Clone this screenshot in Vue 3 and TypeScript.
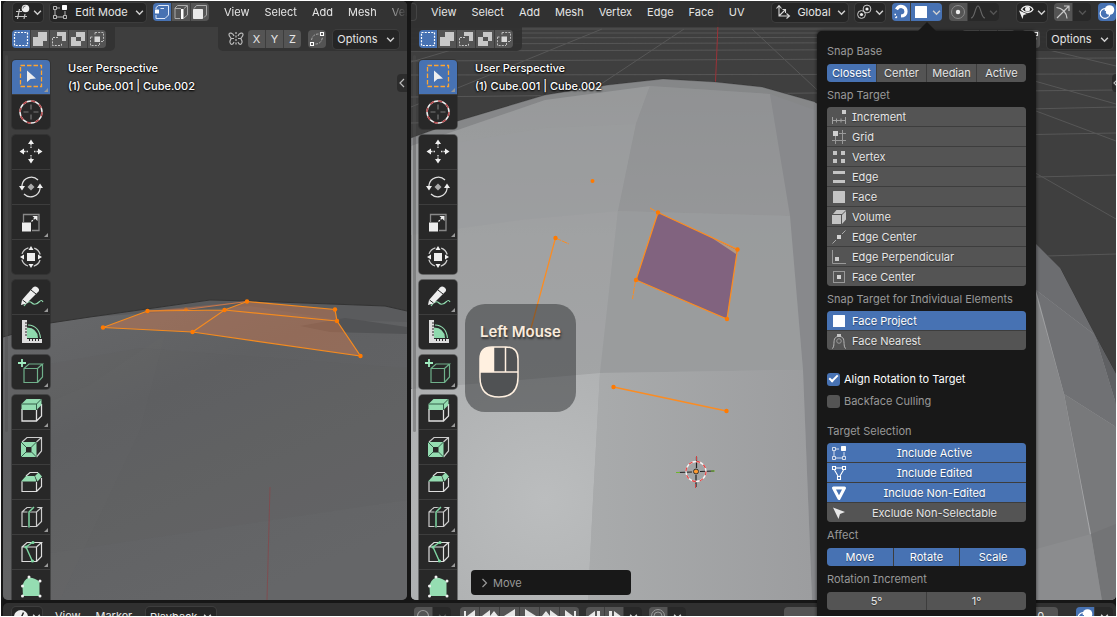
<script setup lang="ts">
import { ref } from 'vue'

interface Tool { id: string; label: string; more?: boolean }
interface Option { id: string; label: string }

const toolGroups: Tool[][] = [
  [{ id: 'select', label: 'Select Box', more: true }, { id: 'cursor', label: 'Cursor' }],
  [
    { id: 'move', label: 'Move' },
    { id: 'rotate', label: 'Rotate' },
    { id: 'scale', label: 'Scale', more: true },
    { id: 'transform', label: 'Transform' },
  ],
  [{ id: 'annotate', label: 'Annotate', more: true }, { id: 'measure', label: 'Measure' }],
  [{ id: 'addcube', label: 'Add Cube', more: true }],
  [
    { id: 'extrude', label: 'Extrude Region', more: true },
    { id: 'inset', label: 'Inset Faces' },
    { id: 'bevel', label: 'Bevel' },
    { id: 'loopcut', label: 'Loop Cut', more: true },
    { id: 'knife', label: 'Knife', more: true },
    { id: 'poly', label: 'Poly Build' },
  ],
]
const selectModes = ['new', 'extend', 'subtract', 'invert', 'intersect']
const menusLeft = ['View', 'Select', 'Add', 'Mesh', 'Vertex']
const menusRight = ['View', 'Select', 'Add', 'Mesh', 'Vertex', 'Edge', 'Face', 'UV']
const axes = ['X', 'Y', 'Z']
const snapBases = ['Closest', 'Center', 'Median', 'Active']
const snapTargets: Option[] = [
  { id: 'increment', label: 'Increment' },
  { id: 'grid', label: 'Grid' },
  { id: 'vertex', label: 'Vertex' },
  { id: 'edge', label: 'Edge' },
  { id: 'face', label: 'Face' },
  { id: 'volume', label: 'Volume' },
  { id: 'edgecenter', label: 'Edge Center' },
  { id: 'perp', label: 'Edge Perpendicular' },
  { id: 'facecenter', label: 'Face Center' },
]
const individualTargets: Option[] = [
  { id: 'face', label: 'Face Project' },
  { id: 'nearest', label: 'Face Nearest' },
]
const selections: Option[] = [
  { id: 'object', label: 'Include Active' },
  { id: 'edited', label: 'Include Edited' },
  { id: 'nonedited', label: 'Include Non-Edited' },
  { id: 'arrow', label: 'Exclude Non-Selectable' },
]
const affects = ['Move', 'Rotate', 'Scale']

const activeTool = ref('select')
const activeMode = ref('new')
const base = ref('Closest')
const target = ref('')
const individual = ref('Face Project')
const align = ref(true)
const backface = ref(false)
const included = ref(['Include Active', 'Include Edited', 'Include Non-Edited'])
const affected = ref(['Move', 'Rotate', 'Scale'])
const coarse = ref('5°')
const fine = ref('1°')

function flip(list: string[], item: string): string[] {
  return list.includes(item) ? list.filter((entry) => entry !== item) : [...list, item]
}
</script>

<template>
  <div class="app">
    <svg class="defs" aria-hidden="true">
      <symbol id="i-chev" viewBox="0 0 8 8"><path d="M1 2.5 4 5.5 7 2.5" fill="none" stroke="currentColor" stroke-width="1.3" /></symbol>
      <symbol id="i-view3d" viewBox="0 0 16 16">
        <path d="M2 7.5h6M1 12.5h12M5.500 5 3.500 15M11 10l-1 5" fill="none" stroke="#c4c4c4" stroke-width="1.2" />
        <circle cx="11.500" cy="4.500" r="3.800" fill="#ededed" /><path d="M9 4.500a2.500 2.500 0 0 1 2.500-2.500" fill="none" stroke="#777" />
      </symbol>
      <symbol id="i-object" viewBox="0 0 16 16">
        <path d="M1.500 2.500h3v3h-3zM1.500 11.500h3v3h-3zM11.500 11.500h3v3h-3zM3 6v5M5 13h6M13 7v4M5 4h3" fill="none" stroke="currentColor" stroke-width="1" opacity=".75" />
        <rect x="10" y="1" width="5" height="5" rx=".7" fill="#fff" />
      </symbol>
      <symbol id="i-mvert" viewBox="0 0 16 16">
        <path d="M2 5V3.500L4.500 1.500H14.500V11L11 14.500H2V11M6.500 4.500H10" fill="none" stroke="#dfe8f7" stroke-width="1" />
        <rect x="1" y="5.500" width="4" height="4" rx=".6" fill="#fff" />
      </symbol>
      <symbol id="i-medge" viewBox="0 0 16 16">
        <path d="M7 14.500H2V4L4.500 1.500H14.500V11L11 14M2 4.500h6M11 4.500 14 2" fill="none" stroke="#aaa" stroke-width="1" />
        <rect x="8" y="5" width="2.500" height="10" fill="#fff" />
      </symbol>
      <symbol id="i-mface" viewBox="0 0 16 16">
        <path d="M2 4.500 4.500 1.500H14.500V11L12 13.500" fill="none" stroke="#aaa" stroke-width="1" />
        <rect x="1" y="5" width="10" height="10" rx=".8" fill="#e8e8e8" />
      </symbol>
      <symbol id="i-new" viewBox="0 0 16 16"><rect x="1.500" y="1.500" width="13" height="13" fill="none" stroke="#fff" stroke-width="1.200" stroke-dasharray="2 1.250" /></symbol>
      <symbol id="i-extend" viewBox="0 0 16 16"><path d="M6 1h9v9h-4v5H1V6h5z" fill="#c8c8c8" /></symbol>
      <symbol id="i-subtract" viewBox="0 0 16 16"><path d="M6 1h9v9h-4V5H6z" fill="#c8c8c8" /><path d="M4 6.500H1.500v8h9V12M5 6.500h3" fill="none" stroke="#c8c8c8" stroke-dasharray="2 1.200" /></symbol>
      <symbol id="i-invert" viewBox="0 0 16 16"><path fill-rule="evenodd" d="M6 1h9v9h-4v5H1V6h5zM6 6v4h5V6z" fill="#c8c8c8" /></symbol>
      <symbol id="i-intersect" viewBox="0 0 16 16"><path d="M6 1.500h8.500v8.500M1.500 6v8.500H10M1.500 6H4M6 1.500V4M14 10.500h-2.500M10.500 14V12" fill="none" stroke="#bbb" stroke-dasharray="2 1.200" /><rect x="5.500" y="5.500" width="5.500" height="5.500" fill="#d8d8d8" /></symbol>
      <symbol id="i-mirror" viewBox="0 0 16 16">
        <path d="M8 1v14" stroke="#ddd" stroke-dasharray="2 1.500" />
        <path d="M6 5C5 2 1 1 1 3.500 1 6 3 6 3 7.500S1.500 9 2 11.500 5 14 6 11M10 5c1-3 5-4 5-1.500C15 6 13 6 13 7.500s1.500 1.500 1 4S11 14 10 11M3.500 7.500H6M10 7.500h2.500" fill="none" stroke="#bbb" stroke-width="1.200" />
      </symbol>
      <symbol id="i-falloff" viewBox="0 0 16 16">
        <path d="M1.500 11.500h3v3h-3zM11.500 1.500h3v3h-3z" fill="none" stroke="#fff" stroke-width="1.100" />
        <path d="M2.500 9C3 5 6 3 9.500 3M6.500 13c4.500 0 6.500-3 7-7" fill="none" stroke="#a8a8a8" stroke-dasharray="2.500 1.300" />
      </symbol>
      <symbol id="i-axes" viewBox="0 0 16 16">
        <path d="M4 2v10h10M1.500 4.500 4 1.500l2.500 3M11.500 9.500 14.500 12l-3 2.500M4 12l6-6M7.500 5.500h3V9" fill="none" stroke="#d8d8d8" stroke-width="1.100" />
      </symbol>
      <symbol id="i-pivot" viewBox="0 0 16 16">
        <circle cx="5.500" cy="10.500" r="3.900" fill="none" stroke="#ccc" /><circle cx="11" cy="5" r="3.900" fill="none" stroke="#ccc" />
        <circle cx="5.500" cy="10.500" r="1.600" fill="#eee" /><circle cx="11" cy="5" r="1.600" fill="#eee" />
      </symbol>
      <symbol id="i-magnet" viewBox="0 0 16 16">
        <path d="M3.500 5.500C6 .500 13 2 13 7.500c0 3.500-2.500 4.500-5.500 4.500" fill="none" stroke="#fff" stroke-width="3.200" />
        <path d="M2 5.500 6 7.500M7.500 9.500v4.500" stroke="#4772b3" stroke-width="1" /><path d="M1.500 10.500h1.500M2.500 14l1.500-1.500" stroke="#fff" stroke-width="1.500" />
      </symbol>
      <symbol id="i-face" viewBox="0 0 16 16"><rect x="2" y="2" width="12" height="12" rx=".5" fill="currentColor" /></symbol>
      <symbol id="i-prop" viewBox="0 0 16 16"><circle cx="8" cy="8" r="6.500" fill="none" stroke="#8a8a8a" /><circle cx="8" cy="8" r="2.200" fill="#eee" /></symbol>
      <symbol id="i-curve" viewBox="0 0 16 16"><path d="M1 14c4 0 4-12 7-12s3 12 7 12" fill="none" stroke="#666" stroke-width="1.200" /></symbol>
      <symbol id="i-eye" viewBox="0 0 16 16">
        <path d="M3.500 5.500C6 1 12.500 1 15 5.500 12.500 9.500 7 9.500 3.500 5.500z" fill="none" stroke="#eee" stroke-width="1.300" /><circle cx="9.500" cy="5" r="2.500" fill="#eee" />
        <path d="M1 6.500 9 10 5.500 11 4.500 15z" fill="#eee" />
      </symbol>
      <symbol id="i-gizmo" viewBox="0 0 16 16">
        <path d="M1.500 3.500C7 4 11.500 8 12 14.500M2 14 13.500 2.500M9 2h5v5" fill="none" stroke="#c8c8c8" stroke-width="1.200" />
      </symbol>
      <symbol id="i-overlay" viewBox="0 0 16 16"><circle cx="6" cy="9.500" r="4.800" fill="none" stroke="#fff" stroke-width="1.200" /><circle cx="10.500" cy="6" r="4.800" fill="#fff" /><path d="M6.500 7a4 4 0 0 0 3.500 5" fill="none" stroke="#4772b3" /></symbol>
      <symbol id="i-timeline" viewBox="0 0 16 16"><circle cx="8" cy="8" r="7" fill="#ededed" /><path d="M8 9 10.500 3.500M8 9 5 12" stroke="#222" stroke-width="1.500" /></symbol>

      <symbol id="i-increment" viewBox="0 0 16 16"><path d="M1.500 8v7M14.500 8v7M5.500 9.500v4M10 9.500v4M1.500 11.500h13" fill="none" stroke="#a0a0a0" /><rect x="11" y="1" width="4" height="4" fill="#ccc" /></symbol>
      <symbol id="i-grid" viewBox="0 0 16 16"><path d="M4.500 7v8M11.500 1v14M1 11.500h14M8 4.500h7" fill="none" stroke="#999" /><rect x="2" y="2" width="5" height="5" fill="#d0d0d0" /></symbol>
      <symbol id="i-vertex" viewBox="0 0 16 16"><path d="M2 2h4v4H2zM10 2h4v4h-4zM2 10h4v4H2zM10 10h4v4h-4z" fill="currentColor" /></symbol>
      <symbol id="i-edge" viewBox="0 0 16 16"><path d="M2 2h12v3H2zM2 11h12v3H2z" fill="currentColor" /></symbol>
      <symbol id="i-volume" viewBox="0 0 16 16"><path d="M1 6h9v9H1zM2 5l3.500-4H15l-4 4zM11 6l4-4v8.500L11 15z" fill="currentColor" /></symbol>
      <symbol id="i-edgecenter" viewBox="0 0 16 16"><path d="M1.500 14.500 5 11M11 5l3.500-3.500" stroke="#aaa" /><rect x="6" y="6" width="4" height="4" fill="#d4d4d4" /></symbol>
      <symbol id="i-perp" viewBox="0 0 16 16"><path d="M1.500 1v13.500H15" fill="none" stroke="#999" /><rect x="4" y="8" width="4" height="4" fill="#ccc" /></symbol>
      <symbol id="i-facecenter" viewBox="0 0 16 16"><rect x="2.500" y="2.500" width="11" height="11" fill="none" stroke="#999" /><rect x="6" y="6" width="4" height="4" fill="#d4d4d4" /></symbol>
      <symbol id="i-nearest" viewBox="0 0 16 16"><path d="M1 15.500C3.500 15 2.500 9.500 3.500 6 5 2.500 11 2.500 12.500 6c1 3.500 0 9 2.500 9.500" fill="none" stroke="#b5b5b5" /><circle cx="8" cy="8" r="2.300" fill="none" stroke="#999" /><rect x="6" y="1" width="4" height="3" fill="#c4c4c4" /></symbol>
      <symbol id="i-edited" viewBox="0 0 16 16"><path d="M1.500 1.500h3v3h-3zM11.500 1.500h3v3h-3zM6.500 11.500h3v3h-3zM5 3h6M3.500 5 7 11M12.500 5 9 11" fill="none" stroke="#fff" stroke-width="1.100" /></symbol>
      <symbol id="i-nonedited" viewBox="0 0 16 16"><path d="M2.500 3h11L8 13.500z" fill="none" stroke="#fff" stroke-width="3" stroke-linejoin="round" /></symbol>
      <symbol id="i-arrow" viewBox="0 0 16 16"><path d="M2 2.500 14 7 9 9 7.500 14z" fill="#e8e8e8" /></symbol>

      <symbol id="i-first" viewBox="0 0 16 16"><path d="M2 3h2v12H2zM13 2v12L5 8z" fill="#e6e6e6" /></symbol>
      <symbol id="i-prevkey" viewBox="0 0 16 16"><path d="M8 2v12L0 8zM12 3l4 5-4 5-4-5z" fill="#e6e6e6" /></symbol>
      <symbol id="i-rev" viewBox="0 0 16 16"><path d="M13 1v14L2 8z" fill="#e6e6e6" /></symbol>
      <symbol id="i-play" viewBox="0 0 16 16"><path d="M3 1v14l11-7z" fill="#e6e6e6" /></symbol>
      <symbol id="i-nextkey" viewBox="0 0 16 16"><path d="M8 2v12l8-6zM4 3 0 8l4 5 4-5z" fill="#e6e6e6" /></symbol>
      <symbol id="i-last" viewBox="0 0 16 16"><path d="M12 3h2v12h-2zM3 2v12l8-6z" fill="#e6e6e6" /></symbol>
      <symbol id="i-stepback" viewBox="0 0 16 16"><path d="M8 3v12L0 9zM10 3h3v12h-3z" fill="#e6e6e6" /></symbol>
      <symbol id="i-stepnext" viewBox="0 0 16 16"><path d="M8 3v12l8-6zM3 3h3v12H3z" fill="#e6e6e6" /></symbol>
      <symbol id="i-rec" viewBox="0 0 16 16"><circle cx="8" cy="8" r="5.500" fill="none" stroke="#999" stroke-width="1.200" /></symbol>
      <symbol id="i-sync" viewBox="0 0 16 16"><circle cx="8" cy="8" r="6.500" fill="none" stroke="#999" /><circle cx="8" cy="8" r="4" fill="none" stroke="#999" /></symbol>

      <symbol id="t-select" viewBox="0 0 38 34">
        <rect x="8.500" y="5.500" width="21" height="21" fill="none" stroke="#ffa530" stroke-width="1.300" stroke-dasharray="4.500 2" />
        <path d="M15 10.500 24 18.500 18.500 19 15 22z" fill="#eee" />
      </symbol>
      <symbol id="t-cursor" viewBox="0 0 38 34">
        <circle cx="19" cy="17" r="11" fill="none" stroke="#eee" stroke-width="1.500" /><circle cx="19" cy="17" r="11" fill="none" stroke="#b4494c" stroke-width="1.500" stroke-dasharray="4.300 4.300" />
        <path d="M19 9.500v5M19 19.500v5M11.500 17h5M21.500 17h5" stroke="#777" stroke-width="1.200" />
      </symbol>
      <symbol id="t-move" viewBox="0 0 38 34">
        <path d="M19 4.500 22 9h-6zM19 28.500 16 24h6zM7.500 16.500 12 13.500v6zM30.500 16.500 26 19.500v-6z" fill="#f0f0f0" />
        <path d="M19 9v4M19 20v4M12 16.500h4M22 16.500h4" stroke="#ddd" stroke-width="1.300" stroke-dasharray="1.500 1" />
      </symbol>
      <symbol id="t-rotate" viewBox="0 0 38 34">
        <path d="M10 15a9.500 9.500 0 0 1 16-5M28 19a9.500 9.500 0 0 1-16 5M10 15v1M28 19v-1" fill="none" stroke="#ddd" stroke-width="1.300" />
        <path d="M7 16h6l-3 4.500zM25 18h6l-3-4.500z" fill="#f0f0f0" /><path d="M19 13.500 22.500 17 19 20.500 15.500 17z" fill="#aaa" />
      </symbol>
      <symbol id="t-scale" viewBox="0 0 38 34">
        <path d="M11.500 17V9.500h15.500V25.500H20" fill="none" stroke="#888" stroke-width="1.300" />
        <rect x="10" y="17.500" width="9" height="9" fill="#eee" /><path d="m19.500 16.500 3.500-3.500" stroke="#eee" stroke-width="1.300" stroke-dasharray="2 1" /><path d="M20.500 11h5v5z" fill="#f0f0f0" />
      </symbol>
      <symbol id="t-transform" viewBox="0 0 38 34">
        <circle cx="19" cy="17" r="9.500" fill="none" stroke="#ccc" stroke-width="1.300" stroke-dasharray="9 5.920" stroke-dashoffset="-3" />
        <rect x="15" y="13" width="8" height="8" fill="#eee" />
        <path d="M19 6l2.500 4h-5zM19 28l-2.500-4h5zM8 17l4-2.500v5zM30 17l-4 2.500v-5z" fill="#f0f0f0" />
      </symbol>
      <symbol id="t-annotate" viewBox="0 0 38 34">
        <path d="M12 26c3-5 6-5 8-3s5 1 7-1 3-2 4 0" fill="none" stroke="#8fd9ad" stroke-width="1.200" />
        <path d="m10 20 11-12.500q2-2 4.500 0t1 4L14.500 23.500 9 25z" fill="#eee" /><path d="m19 10 5 4M10.500 20l4 3" stroke="#282828" stroke-width="1" />
      </symbol>
      <symbol id="t-measure" viewBox="0 0 38 34">
        <path d="M15 23V12.500Q25.500 13 26 23z" fill="#8fd9ad" /><path d="M16 10Q27 10.500 28.500 23" fill="none" stroke="#8fd9ad" stroke-width="1.200" />
        <path d="M10 5h5v19h15v4H10z" fill="#ddd" /><path d="M13 8h2M13 11h2M13 14h2M13 17h2M13 20h2M17.500 24v2M20.500 24v2M23.500 24v2M26.500 24v2" stroke="#282828" />
      </symbol>
      <symbol id="t-addcube" viewBox="0 0 38 34">
        <path d="M10 4v8M6 8h8" stroke="#a0eec0" stroke-width="1.800" />
        <path d="M12 13.500h13.500V27.500H12zM12 13.500l5-4.500h13.500l-5 4.500M30.500 9v13l-5 5.500" fill="none" stroke="#6fb08a" stroke-width="1.200" />
      </symbol>
      <symbol id="t-extrude" viewBox="0 0 38 34">
        <path d="M10 14v12h14.500V14M24.500 26l5-5V9" fill="none" stroke="#e0e0e0" stroke-width="1.300" />
        <path d="M9.500 9 14.500 4H29.500v6l-5 5h-15z" fill="#95ddb2" /><path d="M9.500 9h15l5-5M24.500 9v6" fill="none" stroke="#35604a" />
      </symbol>
      <symbol id="t-inset" viewBox="0 0 38 34">
        <path d="M10 12l5-4.500h14.500V21l-5 6M24.500 12l5-4.500" fill="none" stroke="#ccc" stroke-width="1.200" />
        <rect x="9" y="12" width="15.500" height="15" fill="#95ddb2" /><rect x="14" y="17" width="5.500" height="5.500" fill="#282828" /><path d="m9 12 5 5M24.500 12l-5 5M9 27l5-5M24.500 27l-5-5" stroke="#35604a" />
      </symbol>
      <symbol id="t-bevel" viewBox="0 0 38 34">
        <path d="M10 16.500v10h14.500V17M24.500 26.500l5-5V13M14 11l4-3.500h8" fill="none" stroke="#ddd" stroke-width="1.200" />
        <path d="M9 16.500 14 11h8.500l2 5.500z" fill="#95ddb2" /><path d="m23 11 3.500-3.500 3.500 4-4.500 5z" fill="#95ddb2" />
      </symbol>
      <symbol id="t-loopcut" viewBox="0 0 38 34">
        <path d="M10 12h14.500V26.500H10zM10 12l5-4.500h14.500l-5 4.500M29.500 7.500v14l-5 5" fill="none" stroke="#ccc" stroke-width="1.200" />
        <path d="M13 9.500 21 7h5L18 12v16h-2.500V11z" fill="#282828" /><path d="M17 27.500V12l5-5" fill="none" stroke="#7ed6a2" stroke-width="1.500" />
      </symbol>
      <symbol id="t-knife" viewBox="0 0 38 34">
        <path d="M10 12h14.500V26.500H10zM10 12l5-4.500h14.500l-5 4.500M29.500 7.500v14l-5 5" fill="none" stroke="#ddd" stroke-width="1.200" />
        <path d="m21 7-7 5 6.500 14.500" fill="none" stroke="#7ed6a2" stroke-width="1.400" /><circle cx="21" cy="7.500" r="1.600" fill="#7ed6a2" /><circle cx="14" cy="12" r="1.600" fill="#7ed6a2" /><circle cx="20.500" cy="26" r="1.600" fill="#7ed6a2" />
      </symbol>
      <symbol id="t-poly" viewBox="0 0 38 34">
        <path d="M10.500 17Q11 10 17 7.500q7 .5 10.500 4.500V26H11z" fill="#95ddb2" />
        <g fill="#f2f2f2"><circle cx="17" cy="7" r="1.500" /><circle cx="28" cy="11" r="1.500" /><circle cx="10.500" cy="16" r="1.500" /><circle cx="10.500" cy="26" r="1.500" /><circle cx="28" cy="26" r="1.500" /></g>
      </symbol>
    </svg>

    <main class="views">
      <section v-for="side in ['left', 'right']" :key="side" class="view" :class="side">
        <svg v-if="side === 'left'" class="scene" viewBox="3 1 404 599" preserveAspectRatio="xMidYMid slice" aria-hidden="true">
          <defs>
            <linearGradient id="hill" x1="0" y1="0" x2=".6" y2="1"><stop offset="0" stop-color="#68696b" /><stop offset=".4" stop-color="#5f6062" /><stop offset="1" stop-color="#656668" /></linearGradient>
          </defs>
          <rect x="3" y="1" width="404" height="599" fill="#3e3e3e" />
          <path d="M3 337 50 323 90 317 210 300 250 301 385 306 407 311V600H3z" fill="url(#hill)" />
          <path d="M90 317 210 300 250 301 385 306 407 311V322L340 320 250 306 150 313z" fill="#5a5b5d" />
          <path d="M300 326 345 318 407 327V334L330 332z" fill="#525355" />
          <path d="M3 372 140 348 407 368V500L3 560z" fill="#5a5b5d" opacity=".14" />
          <path d="M3 420 90 385 165 335 140 430 60 600H3z" fill="#6a6b6d" opacity=".12" />
          <path d="M3 337 50 323 90 317 210 300 250 301 385 306 407 311" fill="none" stroke="#333" stroke-width="1" />
          <path d="M270 487 267 600" stroke="#8a4448" opacity=".7" />
          <path d="M103 327.500 147.500 311 224.500 310 247 301.500 335 309.500 337 321 360.500 356 192.500 332z" fill="#d0794f" fill-opacity=".45" />
          <path d="M147.500 311 186 309.500 247 301.500" fill="#d0794f" fill-opacity=".35" stroke="#c9784a" />
          <path d="M103 327.500 147.500 311 224.500 310 247 301.500 335 309.500 337 321 360.500 356 192.500 332zM192.500 332 224.500 310 337 321" fill="none" stroke="#f58b1f" stroke-width="1.200" />
          <g fill="#ff7a00"><circle cx="103" cy="327.500" r="2.200" /><circle cx="147.500" cy="311" r="2.200" /><circle cx="224.500" cy="310" r="2.200" /><circle cx="247" cy="301.500" r="2.200" /><circle cx="335" cy="309.500" r="2.200" /><circle cx="337" cy="321" r="2.200" /><circle cx="360.500" cy="356" r="2.200" /><circle cx="192.500" cy="332" r="2.200" /><circle cx="186" cy="309.500" r="2" opacity=".5" /></g>
        </svg>
        <svg v-else class="scene" viewBox="411 1 705 599" preserveAspectRatio="xMidYMid slice" aria-hidden="true">
          <defs>
            <linearGradient id="dome" x1="0" y1="0" x2="0" y2="1"><stop offset="0" stop-color="#8d8e90" /><stop offset=".3" stop-color="#9d9ea0" /><stop offset="1" stop-color="#a9aaac" /></linearGradient>
            <radialGradient id="glow" gradientUnits="userSpaceOnUse" cx="545" cy="500" r="240"><stop offset="0" stop-color="#bbbdbe" /><stop offset="1" stop-color="#a8aaab" /></radialGradient>
            <linearGradient id="front" x1="0" y1="0" x2="1" y2="0"><stop offset="0" stop-color="#a9abac" /><stop offset="1" stop-color="#9c9d9f" /></linearGradient>
          </defs>
          <rect x="411" y="1" width="705" height="599" fill="#3f3f3f" />
          <g fill="none" stroke="#575757" stroke-width="1">
            <path d="M411 29H1116M411 33H1116M411 38 1116 37M411 44 1116 42M411 51 1116 49M411 61 1116 58M411 75 1116 74M411 97 1116 90M411 123 1116 107M900 137 1116 133M1036 177 1116 175M1046 256 1116 254" />
            <path d="M522 29 411 62M602 29 411 107M684 29 411 210M752 29 860 130M960 29 1116 66M1000 29 1116 50M960 60 1116 104M940 75 1116 141M960 130 1116 219M1060 29 1116 40" />
          </g>
          <path d="M719 1 715.500 82" stroke="#9c3238" />
          <path d="M411 138 458 121 545 95 608 85 663 79 715 82 762 87 815 102 930 165 1036 244 1060 268 1095 335 1116 374V600H411z" fill="url(#dome)" stroke="#333" stroke-width=".8" />
          <path d="M411 138 458 121 545 95 608 85 663 79 715 82 762 87 815 102V118L770 94 650 86 545 100 411 146z" fill="#828385" opacity=".7" />
          <path d="M650 86 636 124 618 211 600 373 520 380 411 388V146L545 100z" fill="#a5a7a8" opacity=".4" />
          <path d="M411 150 545 128 636 124 618 211 520 220 411 235z" fill="#9b9d9e" opacity=".6" />
          <path d="M411 389 520 380 600 373 593 500 588 600H411z" fill="url(#glow)" />
          <path d="M650 86 770 94 783 160 790 216 618 211 636 124z" fill="#929395" opacity=".65" />
          <path d="M618 211 790 216 803 370 600 373z" fill="#999b9c" opacity=".85" />
          <path d="M600 373 803 370 812 600H588L593 500z" fill="url(#front)" />
          <path d="M770 94 815 110 830 600H812L803 370 790 216z" fill="#88898c" />
          <path d="M1036 244 1060 268 1095 335 1036 290z" fill="#6c6d70" />
          <path d="M1036 290 1095 335 1116 404V427L1064 394z" fill="#707174" />
          <path d="M1095 335 1116 374V404z" fill="#5f6063" />
          <path d="M1064 394 1116 427V600H1102L1091 534z" fill="#78797b" />
          <path d="M1036 295 1064 394 1102 600H1036z" fill="#868789" />
          <path d="M1036 549 1091 534 1102 600H1036z" fill="#8b8c8e" />
          <path d="M1091 534 1116 524V600H1102z" fill="#737476" />
          <path d="M658 212.500 737.500 249.500 727 319 636 280z" fill="#81637f" />
          <path d="M712 238 737 250 736 254z" fill="#b39982" />
          <g fill="none" stroke="#fb8c22" stroke-width="1.300">
            <path d="M658 212.500 737.500 249.500 727 319 636 280zM555.500 238 530 332M613.500 387 726.500 411" />
            <path d="M635.500 281 632.500 299M555.500 238 569 244M650 208l7 4" stroke-width="1" stroke-dasharray="6 1" />
          </g>
          <g fill="#ff7a00"><circle cx="592.500" cy="181" r="2" /><circle cx="555.500" cy="238" r="2.200" /><circle cx="530.500" cy="332" r="2.200" /><circle cx="658" cy="212.500" r="2.200" /><circle cx="737.500" cy="249.500" r="2.200" /><circle cx="727" cy="319" r="2.200" /><circle cx="636" cy="280" r="2.200" /><circle cx="613.500" cy="387" r="2.200" /><circle cx="726.500" cy="411" r="2.200" /></g>
          <path d="M678 472.500 692 472M700 471.500l14-.5M696.500 457v11M696 475v12" stroke="#222" stroke-width="1.200" />
          <path d="M676 472.500h4M711 471h4" stroke="#6eb52d" stroke-width="1.200" /><path d="M696.500 456v4M695.500 484v4" stroke="#c44" />
          <circle cx="696" cy="471.500" r="10" fill="none" stroke="#f4f4f4" stroke-width="1.300" /><circle cx="696" cy="471.500" r="10" fill="none" stroke="#e34545" stroke-width="1.300" stroke-dasharray="3.930 3.930" />
          <circle cx="696" cy="471.500" r="2.500" fill="#ff9a2e" stroke="#333" />
        </svg>

        <header class="head">
          <div v-if="side === 'left'" class="bar first">
            <button class="drop" aria-label="Editor type"><svg><use href="#i-view3d" /></svg><svg class="chev"><use href="#i-chev" /></svg></button>
            <button class="drop mode"><svg><use href="#i-object" /></svg><span>Edit Mode</span><svg class="chev"><use href="#i-chev" /></svg></button>
            <div class="strip">
              <button class="on" aria-label="Vertex select"><svg><use href="#i-mvert" /></svg></button>
              <button aria-label="Edge select"><svg><use href="#i-medge" /></svg></button>
              <button aria-label="Face select"><svg><use href="#i-mface" /></svg></button>
            </div>
            <nav class="menus fade"><button v-for="m in menusLeft" :key="m">{{ m }}</button></nav>
          </div>
          <div v-else class="bar second">
            <div class="stub"></div>
            <nav class="menus"><button v-for="m in menusRight" :key="m">{{ m }}</button></nav>
            <button class="drop orient"><svg><use href="#i-axes" /></svg><span>Global</span><svg class="chev"><use href="#i-chev" /></svg></button>
            <button class="drop" aria-label="Pivot point"><svg><use href="#i-pivot" /></svg><svg class="chev"><use href="#i-chev" /></svg></button>
            <div class="strip">
              <button class="on" aria-label="Snap"><svg><use href="#i-magnet" /></svg></button>
              <button class="on wide" aria-label="Snapping"><svg class="white"><use href="#i-face" /></svg><svg class="chev"><use href="#i-chev" /></svg></button>
            </div>
            <div class="strip dim">
              <button aria-label="Proportional editing"><svg><use href="#i-prop" /></svg></button>
              <button class="wide dark" aria-label="Falloff"><svg><use href="#i-curve" /></svg><svg class="chev"><use href="#i-chev" /></svg></button>
            </div>
            <button class="drop eye" aria-label="Visibility"><svg><use href="#i-eye" /></svg><svg class="chev"><use href="#i-chev" /></svg></button>
            <div class="strip dim">
              <button aria-label="Gizmos"><svg><use href="#i-gizmo" /></svg></button>
              <button class="dark" aria-label="Gizmo options"><svg class="chev"><use href="#i-chev" /></svg></button>
            </div>
            <div class="strip"><button class="on" aria-label="Overlays"><svg><use href="#i-overlay" /></svg></button></div>
          </div>
          <div class="tabs">
            <div class="tab start">
              <div class="strip">
                <button v-for="m in selectModes" :key="m" :class="{ on: activeMode === m }" :aria-label="m" @click="activeMode = m"><svg><use :href="'#i-' + m" /></svg></button>
              </div>
            </div>
            <div class="tab end">
              <svg class="mirror"><use href="#i-mirror" /></svg>
              <div class="strip letters"><button v-for="a in axes" :key="a">{{ a }}</button></div>
              <div class="strip"><button aria-label="Auto merge"><svg><use href="#i-falloff" /></svg></button></div>
              <button class="drop options"><span>Options</span><svg class="chev"><use href="#i-chev" /></svg></button>
            </div>
          </div>
        </header>

        <div class="body">
          <div class="scroll"></div>
          <div class="tools">
            <div v-for="(group, g) in toolGroups" :key="g" class="group">
              <button v-for="t in group" :key="t.id" :class="{ on: activeTool === t.id, more: t.more }" :aria-label="t.label" @click="activeTool = t.id"><svg><use :href="'#t-' + t.id" /></svg></button>
            </div>
          </div>
          <div class="info">User Perspective<br />(1) Cube.001 | Cube.002</div>
          <button class="nub" aria-label="Sidebar"><svg viewBox="0 0 8 10"><path d="M6 1 2 5l4 4" fill="none" stroke="#bbb" stroke-width="1.200" /></svg></button>
        </div>

        <template v-if="side === 'right'">
          <div class="keys">
            <span>Left Mouse</span>
            <svg viewBox="0 0 40 52" aria-hidden="true">
              <path d="M1 13Q1 1 13 1H27Q39 1 39 13V31Q39 51 20 51T1 31z" fill="#505254" />
              <path d="M1 26V13Q1 1 13 1h1.500v25z" fill="#fff0e0" />
              <path d="M1 13Q1 1 13 1H27Q39 1 39 13V31Q39 51 20 51T1 31zM1 26H39M14.500 1v25M26.500 1v25" fill="none" stroke="#fff0e0" stroke-width="1.500" />
            </svg>
          </div>
          <button class="redo"><svg viewBox="0 0 8 10"><path d="M2 1l4 4-4 4" fill="none" stroke="#999" stroke-width="1.200" /></svg>Move</button>
        </template>
      </section>
    </main>

    <footer class="timeline">
      <button class="drop" aria-label="Editor type"><svg><use href="#i-timeline" /></svg><svg class="chev"><use href="#i-chev" /></svg></button>
      <nav class="menus"><button>View</button><button>Marker</button></nav>
      <button class="drop playback"><span>Playback</span><svg class="chev"><use href="#i-chev" /></svg></button>
      <div class="strip dim push">
        <button aria-label="Auto keying"><svg><use href="#i-rec" /></svg></button>
        <button class="dark" aria-label="Auto keying options"><svg class="chev"><use href="#i-chev" /></svg></button>
      </div>
      <div class="strip transport">
        <button v-for="i in ['first', 'prevkey', 'rev', 'play', 'nextkey', 'last']" :key="i" :aria-label="i"><svg><use :href="'#i-' + i" /></svg></button>
      </div>
      <div class="strip">
        <button aria-label="Step back"><svg><use href="#i-stepback" /></svg></button>
        <button aria-label="Step forward"><svg><use href="#i-stepnext" /></svg></button>
        <button class="dark" aria-label="Step options"><svg class="chev"><use href="#i-chev" /></svg></button>
      </div>
      <div class="strip">
        <button aria-label="Sync"><svg><use href="#i-sync" /></svg></button>
        <button class="dark" aria-label="Sync options"><svg class="chev"><use href="#i-chev" /></svg></button>
      </div>
      <input class="frame" aria-label="Frame" value="0" />
      <div class="strip last">
        <button class="on" aria-label="Overlays"><svg><use href="#i-overlay" /></svg></button>
        <button class="dark" aria-label="Overlay options"><svg class="chev"><use href="#i-chev" /></svg></button>
      </div>
    </footer>

    <aside class="popup">
      <h2>Snap Base</h2>
      <div class="row"><button v-for="b in snapBases" :key="b" :class="{ on: base === b }" @click="base = b">{{ b }}</button></div>
      <h2>Snap Target</h2>
      <div class="list"><button v-for="s in snapTargets" :key="s.id" :class="{ on: target === s.label }" @click="target = s.label"><svg><use :href="'#i-' + s.id" /></svg><span>{{ s.label }}</span></button></div>
      <h2>Snap Target for Individual Elements</h2>
      <div class="list"><button v-for="s in individualTargets" :key="s.id" :class="{ on: individual === s.label }" @click="individual = s.label"><svg><use :href="'#i-' + s.id" /></svg><span>{{ s.label }}</span></button></div>
      <div class="checks">
        <label class="ticked"><input v-model="align" type="checkbox" />Align Rotation to Target</label>
        <label><input v-model="backface" type="checkbox" />Backface Culling</label>
      </div>
      <h2>Target Selection</h2>
      <div class="list centered"><button v-for="s in selections" :key="s.id" :class="{ on: included.includes(s.label) }" @click="included = flip(included, s.label)"><svg><use :href="'#i-' + s.id" /></svg><span>{{ s.label }}</span></button></div>
      <h2>Affect</h2>
      <div class="row"><button v-for="a in affects" :key="a" :class="{ on: affected.includes(a) }" @click="affected = flip(affected, a)">{{ a }}</button></div>
      <h2>Rotation Increment</h2>
      <div class="row"><input v-model="coarse" aria-label="Rotation increment" /><input v-model="fine" aria-label="Precision rotation increment" /></div>
    </aside>
  </div>
</template>

<style>
body { background: #fff; overflow: hidden; }
</style>

<style scoped>
.app {
  position: relative;
  box-sizing: border-box;
  height: 100vh;
  border: 1px solid #fff;
  padding-left: 2px;
  background: #161616;
  display: grid;
  grid-template-rows: minmax(0, 1fr) 13px;
  gap: 3px;
  overflow: hidden;
  font-family: Inter, "Liberation Sans", sans-serif;
  font-feature-settings: "cv08";
  font-size: 11px;
  line-height: 18px;
  color: #e6e6e6;
}
.defs { position: absolute; width: 0; height: 0; }
button, input { font: inherit; font-feature-settings: inherit; color: inherit; border: 0; padding: 0; margin: 0; background: none; }
button { display: flex; align-items: center; justify-content: center; white-space: nowrap; }
svg { width: 16px; height: 16px; flex: none; display: block; }
svg.chev { width: 9px; height: 9px; color: #d0d0d0; }
svg.white { color: #fff; }
.views { display: grid; grid-template-columns: minmax(0, 404fr) minmax(0, 705fr); gap: 4px; min-height: 0; }
.view { position: relative; overflow: hidden; border-radius: 5px; display: flex; flex-direction: column; }
.scene { position: absolute; inset: 0; width: 100%; height: 100%; }
.head { position: relative; }
.bar { display: flex; align-items: center; height: 22px; padding-bottom: 4px; gap: 7px; background: #303030; overflow: hidden; }
.first { padding-left: 10px; background: #333; }
.second { background: rgba(48, 48, 48, .93); }
.drop { height: 19px; min-width: 30px; background: #252525; border-radius: 4px; box-shadow: 0 0 0 1px #3d3d3d; flex: none; gap: 3px; }
.mode { width: 96px; gap: 7px; }
.orient { width: 76px; margin-left: 21px; gap: 6px; }
.eye { margin-left: 11px; }
.strip { display: flex; gap: 1px; border-radius: 4px; overflow: hidden; background: #3d3d3d; flex: none; }
.strip button { width: 18px; height: 18px; background: #545454; }
.strip .on { background: #4772b3; }
.strip .wide { width: 31px; gap: 3px; }
.strip .dark { background: #282828; }
.dim .chev { color: #555; }
.menus { display: flex; gap: 15px; padding: 0 6px; }
.fade { padding: 0 0 0 8px; overflow: hidden; -webkit-mask-image: linear-gradient(to right, #000 88%, transparent 100%); mask-image: linear-gradient(to right, #000 88%, transparent 100%); }
.stub { width: 6px; height: 18px; border-radius: 0 4px 4px 0; border: 1px solid #444; border-left: 0; box-sizing: border-box; flex: none; margin-right: -6px; }
.second .menus { padding: 0 0 0 13px; }
.tabs { display: flex; justify-content: space-between; height: 24px; }
.tab { display: flex; align-items: center; background: #303030; flex: none; }
.left .tab { background: #333; }
.right .tab { background: rgba(48, 48, 48, .93); }
.start { padding: 0 9px; border-radius: 0 0 5px 0; }
.end { gap: 7px; padding: 0 8px 0 10px; border-radius: 0 0 0 5px; }
.right .start { padding-left: 8px; }
.right .end { padding-right: 3px; }
.mirror { margin-right: -3px; }
.letters button { width: 17px; }
.options { width: 66px; gap: 8px; }
.body { position: relative; display: flex; flex: 1; min-height: 0; align-items: flex-start; }
.scroll { position: absolute; left: 2px; top: 4px; width: 3px; height: 377px; border-radius: 2px; background: rgba(80, 80, 80, .4); }
.tools { display: flex; flex-direction: column; gap: 6px; margin: 9px 0 0 9px; flex: none; }
.right .tools { margin-left: 8px; }
.group { display: flex; flex-direction: column; gap: 1px; border-radius: 4px; overflow: hidden; background: #3d3d3d; box-shadow: 0 0 0 1px rgba(40, 40, 40, .5); }
.group button { position: relative; width: 38px; height: 34px; background: #282828; }
.group .on { background: #4772b3; }
.group svg { width: 38px; height: 34px; }
.more::after { content: ""; position: absolute; right: 2px; bottom: 2px; border: 2px solid #999; border-top-color: transparent; border-left-color: transparent; }
.info { margin: 8px 0 0 18px; color: #fff; font-weight: 500; text-shadow: 0 1px 2px #000, 0 0 2px #000; white-space: nowrap; }
.nub { margin: 23px 0 0 auto; width: 10px; height: 18px; background: rgba(40, 40, 40, .8); border-radius: 4px 0 0 4px; }
.right .nub { width: 4px; overflow: hidden; justify-content: flex-start; }
.nub svg { width: 8px; height: 10px; }
.keys { position: absolute; left: 54px; top: 303px; width: 111px; height: 108px; box-sizing: border-box; padding: 18px 0 0 15px; border-radius: 20px; background: rgba(40, 42, 44, .48); color: #f9ebdc; font-size: 15px; font-weight: 600; line-height: 20px; text-shadow: 1px 2px 2px #333; }
.keys svg { width: 40px; height: 52px; margin: 4px 0 0 -1px; }
.redo { position: absolute; left: 60px; bottom: 5px; width: 160px; height: 25px; border-radius: 4px; background: #181818; color: #999; justify-content: flex-start; padding-left: 9px; gap: 4px; }
.redo svg { width: 9px; height: 10px; }
.timeline { display: flex; align-items: flex-start; gap: 7px; padding: 4px 2px 0 9px; background: #303030; border-radius: 5px 5px 0 0; overflow: hidden; box-sizing: border-box; }
.playback { width: 70px; gap: 6px; margin-left: 1px; }
.push { margin-left: 191px; }
.transport { margin-left: 2px; }
.transport button { width: 19px; }
.frame { width: 274px; height: 18px; margin-left: 91px; padding-right: 14px; box-sizing: border-box; background: #545454; border-radius: 4px; text-align: right; }
.last { margin-left: 11px; }
.popup { position: absolute; top: 30px; right: 80px; width: 219px; box-sizing: border-box; padding: 10px 10px 12px; background: #181818; border-radius: 5px; box-shadow: 0 0 3px 1px rgba(0, 0, 0, .4); display: flex; flex-direction: column; gap: 2px; }
.popup::before { content: ""; position: absolute; top: -9px; left: 101px; border: 9px solid transparent; border-top: 0; border-bottom-color: #181818; }
.popup h2 { margin: 0; font: inherit; font-feature-settings: inherit; line-height: 20px; color: #989898; white-space: nowrap; }
.row, .list { display: grid; gap: 1px; background: #3d3d3d; border-radius: 4px; overflow: hidden; }
.row { grid-auto-flow: column; grid-auto-columns: minmax(0, 1fr); height: 18px; margin: 1px 0; }
.row button, .row input, .list button { background: #545454; min-width: 0; color: #e6e6e6; text-shadow: 0 1px 1px rgba(0, 0, 0, .4); }
.row input { text-align: center; }
.row .on, .list .on { background: #4772b3; color: #fff; }
.list { grid-auto-rows: 19px; margin-bottom: 1px; }
.list button { justify-content: flex-start; padding-left: 4px; gap: 5px; }
.list svg { color: #c4c4c4; }
.list .on svg { color: #fff; }
.centered span { flex: 1; text-align: center; padding-right: 9px; }
.checks { display: flex; flex-direction: column; gap: 2px; margin: 16px 0 8px; }
.checks label { display: flex; align-items: center; height: 20px; gap: 4px; color: #989898; }
.checks .ticked { color: #fff; }
.checks input { appearance: none; width: 13px; height: 13px; border-radius: 3px; background: #545454; }
.checks input:checked { background: #4772b3; display: grid; place-items: center; }
.checks input:checked::after { content: ""; width: 7px; height: 3px; border: solid #fff; border-width: 0 0 2px 2px; transform: rotate(-45deg); margin-bottom: 3px; }
</style>
